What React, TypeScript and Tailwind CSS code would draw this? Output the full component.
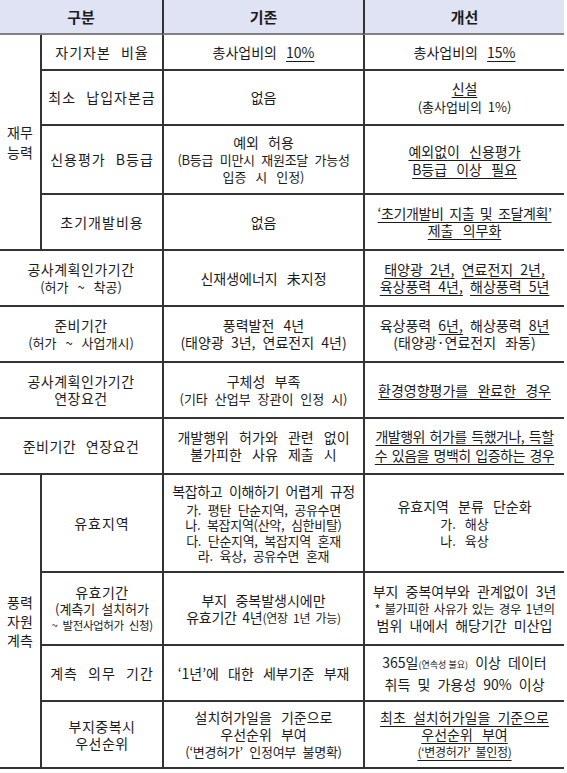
import React from "react";

const font = { fontFamily: '"Noto Sans CJK KR", "Noto Sans", sans-serif' };

const U = ({ children }: { children: React.ReactNode }) => (
  <span className="underline underline-offset-[3px] decoration-1">{children}</span>
);

const cell = "border-b-2 border-[#333] text-center align-middle p-0";
const cellL = "border-b-2 border-l-2 border-[#333] text-center align-middle p-0";
const label = "border-b-2 border-l-2 border-[#333] text-center align-middle p-0 tracking-[1px]";

export default function App() {
  return (
    <div className="w-[567px] h-[773px] bg-white text-[#1c1c1c]" style={font}>
      <table className="w-[564px] table-fixed border-separate border-spacing-0 text-[14px] leading-[17px] [word-spacing:6px]">
        <colgroup>
          <col className="w-[40px]" />
          <col className="w-[122px]" />
          <col className="w-[201px]" />
          <col className="w-[201px]" />
        </colgroup>
        <thead>
          <tr className="h-[35px] bg-[#dfe3f4] font-bold text-[15px]">
            <th colSpan={2} className="border-b-2 border-[#808080] text-center align-middle p-0">구분</th>
            <th className="border-b-2 border-l-2 border-[#808080] border-l-[#333] text-center align-middle p-0">기존</th>
            <th className="border-b-2 border-l-2 border-[#808080] border-l-[#333] text-center align-middle p-0">개선</th>
          </tr>
        </thead>
        <tbody>
          <tr className="h-[36px]">
            <td rowSpan={4} className={cell}>
              <div>재무</div>
              <div className="mt-[3px]">능력</div>
            </td>
            <td className={label}>자기자본 비율</td>
            <td className={cellL}>총사업비의 <U>10%</U></td>
            <td className={cellL}>총사업비의 <U>15%</U></td>
          </tr>
          <tr className="h-[55px]">
            <td className={label}>최소 납입자본금</td>
            <td className={cellL}>없음</td>
            <td className={cellL}>
              <div><U>신설</U></div>
              <div className="text-[13px] mt-[1px] [word-spacing:3px]">(총사업비의 1%)</div>
            </td>
          </tr>
          <tr className="h-[69px]">
            <td className={label}>신용평가 B등급</td>
            <td className={cellL}>
              <div>예외 허용</div>
              <div className="text-[13px] tracking-[-0.3px] [word-spacing:4px]">(B등급 미만시 재원조달 가능성</div>
              <div className="text-[13px]">입증 시 인정)</div>
            </td>
            <td className={cellL}>
              <div className="leading-[18px]"><U>예외없이 신용평가</U></div>
              <div className="leading-[18px]"><U>B등급 이상 필요</U></div>
            </td>
          </tr>
          <tr className="h-[56px]">
            <td className={label}>초기개발비용</td>
            <td className={cellL}>없음</td>
            <td className={cellL}>
              <div className="tracking-[-0.4px] [word-spacing:3px]"><U>‘초기개발비 지출 및 조달계획’</U></div>
              <div><U>제출 의무화</U></div>
            </td>
          </tr>
          <tr className="h-[56px]">
            <td colSpan={2} className={cell}>
              <div className="tracking-[0.5px]">공사계획인가기간</div>
              <div className="text-[13px]">(허가 ~ 착공)</div>
            </td>
            <td className={cellL}>신재생에너지 未지정</td>
            <td className={cellL}>
              <div className="[word-spacing:4px]"><U>태양광 2년,</U> <U>연료전지 2년,</U></div>
              <div className="[word-spacing:4px]"><U>육상풍력 4년,</U> <U>해상풍력 5년</U></div>
            </td>
          </tr>
          <tr className="h-[56px]">
            <td colSpan={2} className={cell}>
              <div className="tracking-[0.5px]">준비기간</div>
              <div className="text-[13px]">(허가 ~ 사업개시)</div>
            </td>
            <td className={cellL}>
              <div>풍력발전 4년</div>
              <div className="[word-spacing:4px]">(태양광 3년, 연료전지 4년)</div>
            </td>
            <td className={cellL}>
              <div className="[word-spacing:4px]">육상풍력 <U>6년,</U> 해상풍력 <U>8년</U></div>
              <div>(태양광·연료전지 좌동)</div>
            </td>
          </tr>
          <tr className="h-[56px]">
            <td colSpan={2} className={cell}>
              <div className="tracking-[0.5px]">공사계획인가기간</div>
              <div className="tracking-[0.5px]">연장요건</div>
            </td>
            <td className={cellL}>
              <div>구체성 부족</div>
              <div className="text-[13px] [word-spacing:4px]">(기타 산업부 장관이 인정 시)</div>
            </td>
            <td className={cellL}>
              <U>환경영향평가를 완료한 경우</U>
            </td>
          </tr>
          <tr className="h-[56px]">
            <td colSpan={2} className={cell}>
              <span className="tracking-[0.5px]">준비기간 연장요건</span>
            </td>
            <td className={cellL}>
              <div className="[word-spacing:7px]">개발행위 허가와 관련 없이</div>
              <div className="[word-spacing:7px]">불가피한 사유 제출 시</div>
            </td>
            <td className={cellL}>
              <div className="tracking-[-0.5px] [word-spacing:2px]"><U>개발행위 허가를 득했거나, 득할</U></div>
              <div className="tracking-[-0.5px] [word-spacing:2px] mt-[2px]"><U>수 있음을 명백히 입증하는 경우</U></div>
            </td>
          </tr>
          <tr className="h-[98px]">
            <td rowSpan={4} className="border-b-2 border-[#333] text-center align-middle p-0 leading-[19px]">
              <div>풍력</div>
              <div>자원</div>
              <div>계측</div>
            </td>
            <td className={label}>유효지역</td>
            <td className={cellL}>
              <div className="tracking-[-0.4px] [word-spacing:4px] mb-[2px]">복잡하고 이해하기 어렵게 규정</div>
              <div className="text-[13px] leading-[15.5px] tracking-[-0.3px] [word-spacing:4px]">가. 평탄 단순지역, 공유수면</div>
              <div className="text-[13px] leading-[15.5px] tracking-[-0.3px] [word-spacing:4px]">나. 복잡지역(산악, 심한비탈)</div>
              <div className="text-[13px] leading-[15.5px] tracking-[-0.3px] [word-spacing:4px]">다. 단순지역, 복잡지역 혼재</div>
              <div className="text-[13px] leading-[15.5px] tracking-[-0.3px] [word-spacing:4px]">라. 육상, 공유수면 혼재</div>
            </td>
            <td className={cellL}>
              <div>유효지역 분류 단순화</div>
              <div className="text-[13px]">가. 해상</div>
              <div className="text-[13px]">나. 육상</div>
            </td>
          </tr>
          <tr className="h-[73px]">
            <td className={cellL}>
              <div className="tracking-[0.5px]">유효기간</div>
              <div className="text-[13px] leading-[16px] [word-spacing:3px]">(계측기 설치허가</div>
              <div className="text-[11.5px] leading-[16px] tracking-[-0.4px] [word-spacing:3px]">~ 발전사업허가 신청)</div>
            </td>
            <td className={cellL}>
              <div className="[word-spacing:5px]">부지 중복발생시에만</div>
              <div className="tracking-[-0.3px] [word-spacing:3px]">유효기간 4년<span className="text-[12px]">(연장 1년 가능)</span></div>
            </td>
            <td className={cellL}>
              <div className="[word-spacing:4px]">부지 중복여부와 관계없이 3년</div>
              <div className="text-[12.5px] tracking-[-0.3px] [word-spacing:2px]">* 불가피한 사유가 있는 경우 1년의</div>
              <div className="[word-spacing:4px]">범위 내에서 해당기간 미산입</div>
            </td>
          </tr>
          <tr className="h-[56px]">
            <td className={label}>계측 의무 기간</td>
            <td className={cellL}>‘1년’에 대한 세부기준 부재</td>
            <td className={cellL}>
              <div className="[word-spacing:4px]">365일<span className="text-[9px] [word-spacing:0px]">(연속성 불요)</span> 이상 데이터</div>
              <div className="mt-[3px] [word-spacing:4px]">취득 및 가용성 90% 이상</div>
            </td>
          </tr>
          <tr className="h-[67px]">
            <td className={cellL}>
              <div className="tracking-[0.5px]">부지중복시</div>
              <div className="tracking-[0.5px]">우선순위</div>
            </td>
            <td className={cellL}>
              <div>설치허가일을 기준으로</div>
              <div>우선순위 부여</div>
              <div className="text-[13px] tracking-[-0.3px] [word-spacing:4px]">(‘변경허가’ 인정여부 불명확)</div>
            </td>
            <td className={cellL}>
              <div className="[word-spacing:4px]"><U>최초 설치허가일을 기준으로</U></div>
              <div><U>우선순위 부여</U></div>
              <div className="text-[12px] tracking-[-0.3px] [word-spacing:3px]"><U>(‘변경허가’ 불인정)</U></div>
            </td>
          </tr>
        </tbody>
      </table>
    </div>
  );
}
